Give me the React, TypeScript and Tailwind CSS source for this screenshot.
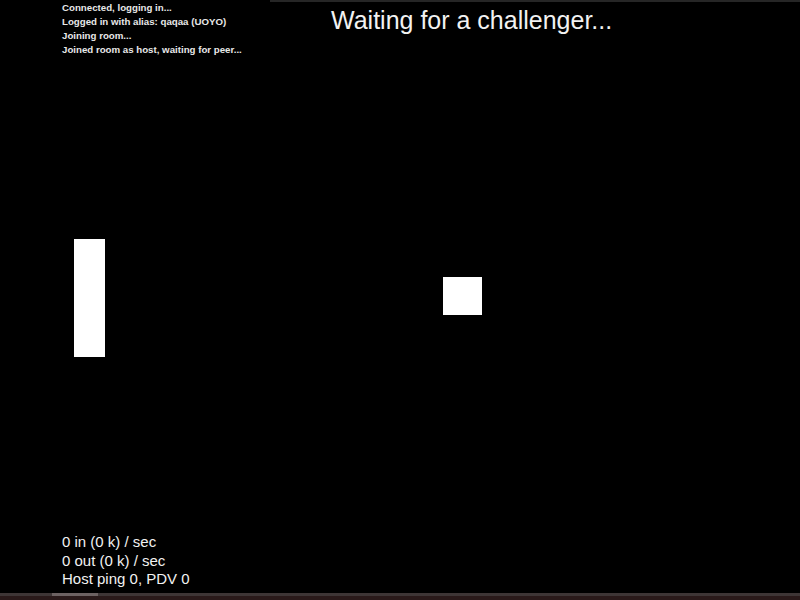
import React from "react";

export default function App() {
  const log = [
    "Connected, logging in...",
    "Logged in with alias: qaqaa (UOYO)",
    "Joining room...",
    "Joined room as host, waiting for peer...",
  ];
  return (
    <div
      className="w-[800px] h-[600px] bg-black flex flex-col overflow-hidden"
      style={{ fontFamily: '"Liberation Sans", Arial, sans-serif' }}
    >
      <div className="relative flex-1 bg-black text-white">
        <div className="absolute left-[270px] right-0 top-0 h-[2px] bg-[#262626]" />
        <div className="absolute left-[62px] top-[1px] flex flex-col text-[9.7px] font-bold leading-[14px] text-[#e8e8e8]">
          {log.map((l) => (
            <div key={l}>{l}</div>
          ))}
        </div>
        <div className="absolute left-[331px] top-[5px] text-[25px] leading-[30px] text-[#f2f2f2]">
          Waiting for a challenger...
        </div>
        <div className="absolute left-[74px] top-[239px] w-[31px] h-[118px] bg-white" />
        <div className="absolute left-[443px] top-[277px] w-[39px] h-[38px] bg-white" />
        <div className="absolute left-[62px] top-[533px] flex flex-col text-[15px] leading-[18.5px] text-[#f2f2f2]">
          <div>0 in (0 k) / sec</div>
          <div>0 out (0 k) / sec</div>
          <div>Host ping 0, PDV 0</div>
        </div>
      </div>
      <div className="h-[3px] flex bg-[#3e3636]">
        <div className="w-[52px]" />
        <div className="w-[46px] bg-[#6c6262]" />
      </div>
      <div className="h-[4px] bg-[#2a1a1a]" />
    </div>
  );
}
